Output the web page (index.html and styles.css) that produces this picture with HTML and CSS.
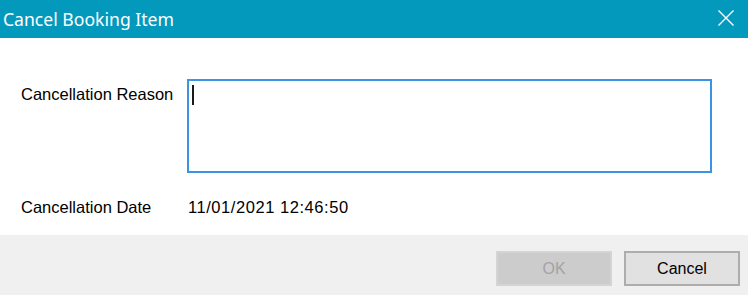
FILE: index.html
```html
<!DOCTYPE html>
<html>
<head>
<meta charset="utf-8">
<link rel="stylesheet" href="styles.css">
</head>
<body>
<div class="dialog">
  <div class="titlebar">
    <span class="title">Cancel Booking Item</span>
    <span class="close" aria-label="Close">
      <svg width="16" height="16" viewBox="0 0 16 16"><path d="M0.5 0.5 L15.5 15.5 M15.5 0.5 L0.5 15.5" stroke="#fff" stroke-width="1.4" fill="none"/></svg>
    </span>
  </div>
  <div class="content">
    <div class="form">
      <div class="label reason-label">Cancellation Reason</div>
      <div class="textbox"><span class="caret"></span></div>
      <div class="label date-label">Cancellation Date</div>
      <div class="value date-label">11/01/2021 12:46:50</div>
    </div>
  </div>
  <div class="footer">
    <button class="btn btn-disabled" disabled>OK</button>
    <button class="btn">Cancel</button>
  </div>
</div>
</body>
</html>
```
FILE: styles.css
```css
html, body {
  margin: 0;
  padding: 0;
  background: #ffffff;
}
.dialog {
  width: 748px;
  height: 295px;
  display: flex;
  flex-direction: column;
  font-family: "Liberation Sans", Arial, sans-serif;
  font-size: 16px;
  color: #000;
}
.titlebar {
  height: 38px;
  flex: 0 0 38px;
  background: #0399bd;
  display: flex;
  align-items: center;
  justify-content: space-between;
  padding: 0 14px 0 3px;
  box-sizing: border-box;
}
.title {
  font-family: "Noto Sans", "Open Sans", sans-serif;
  font-size: 17.6px;
  color: #ffffff;
  line-height: 38px;
}
.close {
  display: flex;
  width: 16px;
  height: 16px;
  margin-top: -3px;
}
.content {
  flex: 1 1 auto;
  padding: 41px 0 0 21px;
  box-sizing: border-box;
}
.form {
  display: grid;
  grid-template-columns: 166px 525px;
  grid-template-rows: 94px auto;
  row-gap: 25px;
}
.label, .value {
  line-height: 18px;
  font-size: 16.5px;
  white-space: nowrap;
}
.reason-label {
  padding-top: 6px;
}
.value {
  padding-left: 1px;
  letter-spacing: 0.55px;
}
.textbox {
  box-sizing: border-box;
  border: 2px solid #3a94e3;
  background: #fff;
  height: 94px;
  padding: 4px 0 0 3px;
}
.caret {
  display: block;
  width: 2px;
  height: 20px;
  background: #1a1a1a;
}
.footer {
  flex: 0 0 60px;
  height: 60px;
  background: #f0f0f0;
  display: flex;
  justify-content: flex-end;
  align-items: flex-start;
  padding: 16px 8px 0 0;
  box-sizing: border-box;
  gap: 12px;
}
.btn {
  width: 116px;
  height: 35px;
  box-sizing: border-box;
  border: 2px solid #adadad;
  background: #e1e1e1;
  font-family: "Liberation Sans", Arial, sans-serif;
  font-size: 16px;
  color: #000;
  padding: 0;
  margin: 0;
}
.btn-disabled {
  background: #cccccc;
  border-color: #d4d4d4;
  color: #a3a3a3;
}
```
